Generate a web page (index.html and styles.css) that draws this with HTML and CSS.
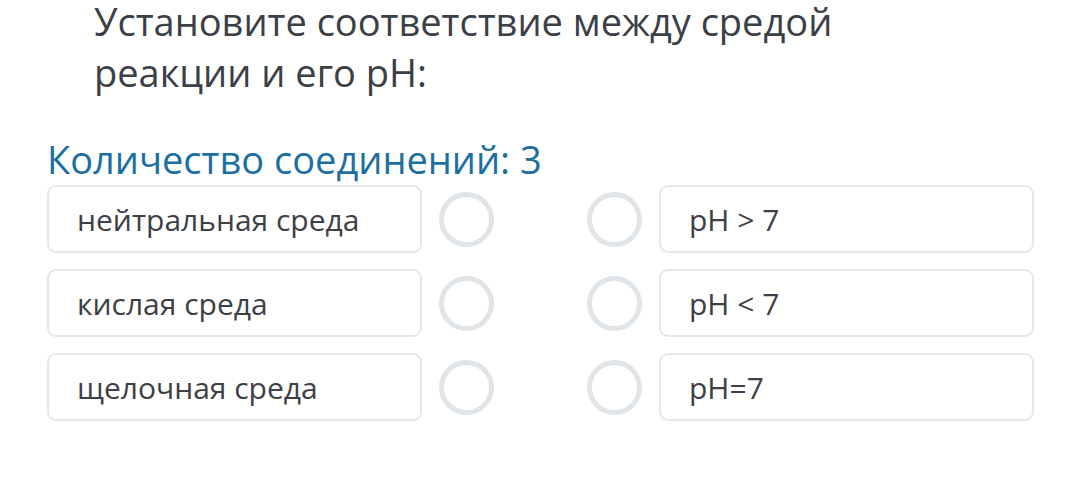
FILE: index.html
```html
<!DOCTYPE html>
<html lang="ru">
<head>
<meta charset="utf-8">
<link rel="stylesheet" href="styles.css">
</head>
<body>
<div class="page">
  <div class="question">
    <div class="qline">Установите соответствие между средой</div>
    <div class="qline">реакции и его pH:</div>
  </div>
  <div class="count">Количество соединений: 3</div>
  <div class="rows">
    <div class="row">
      <div class="box">нейтральная среда</div>
      <div class="dot"></div>
      <div class="spacer"></div>
      <div class="dot"></div>
      <div class="box">pH &gt; 7</div>
    </div>
    <div class="row">
      <div class="box">кислая среда</div>
      <div class="dot"></div>
      <div class="spacer"></div>
      <div class="dot"></div>
      <div class="box">pH &lt; 7</div>
    </div>
    <div class="row">
      <div class="box">щелочная среда</div>
      <div class="dot"></div>
      <div class="spacer"></div>
      <div class="dot"></div>
      <div class="box">pH=7</div>
    </div>
  </div>
</div>
</body>
</html>
```

FILE: styles.css
```css
html, body {
  margin: 0;
  padding: 0;
  background: #ffffff;
}
body {
  font-family: "Open Sans", "Noto Sans", sans-serif;
  color: #3c4045;
}
.page {
  padding-left: 47px;
  overflow: hidden;
  height: 494px;
}
.question {
  padding-left: 47px;
  font-size: 38px;
  color: #3b4046;
  display: flex;
  flex-direction: column;
  gap: 8px;
}
.qline {
  line-height: 43px;
  white-space: nowrap;
}
.count {
  margin-top: 43px;
  font-size: 38px;
  line-height: 44px;
  color: #1d6fa1;
}
.rows {
  margin-top: 4px;
  display: flex;
  flex-direction: column;
  gap: 16px;
}
.row {
  display: flex;
  align-items: center;
  gap: 17px;
}
.box {
  box-sizing: border-box;
  width: 375px;
  height: 68px;
  border: 2px solid #e6e7e8;
  border-radius: 9px;
  padding-left: 28px;
  display: flex;
  align-items: center;
  font-size: 30px;
  color: #3d4146;
}
.dot {
  box-sizing: border-box;
  width: 55px;
  height: 55px;
  border: 5px solid #e0e5e9;
  border-radius: 50%;
}
.spacer {
  width: 59px;
}
```
